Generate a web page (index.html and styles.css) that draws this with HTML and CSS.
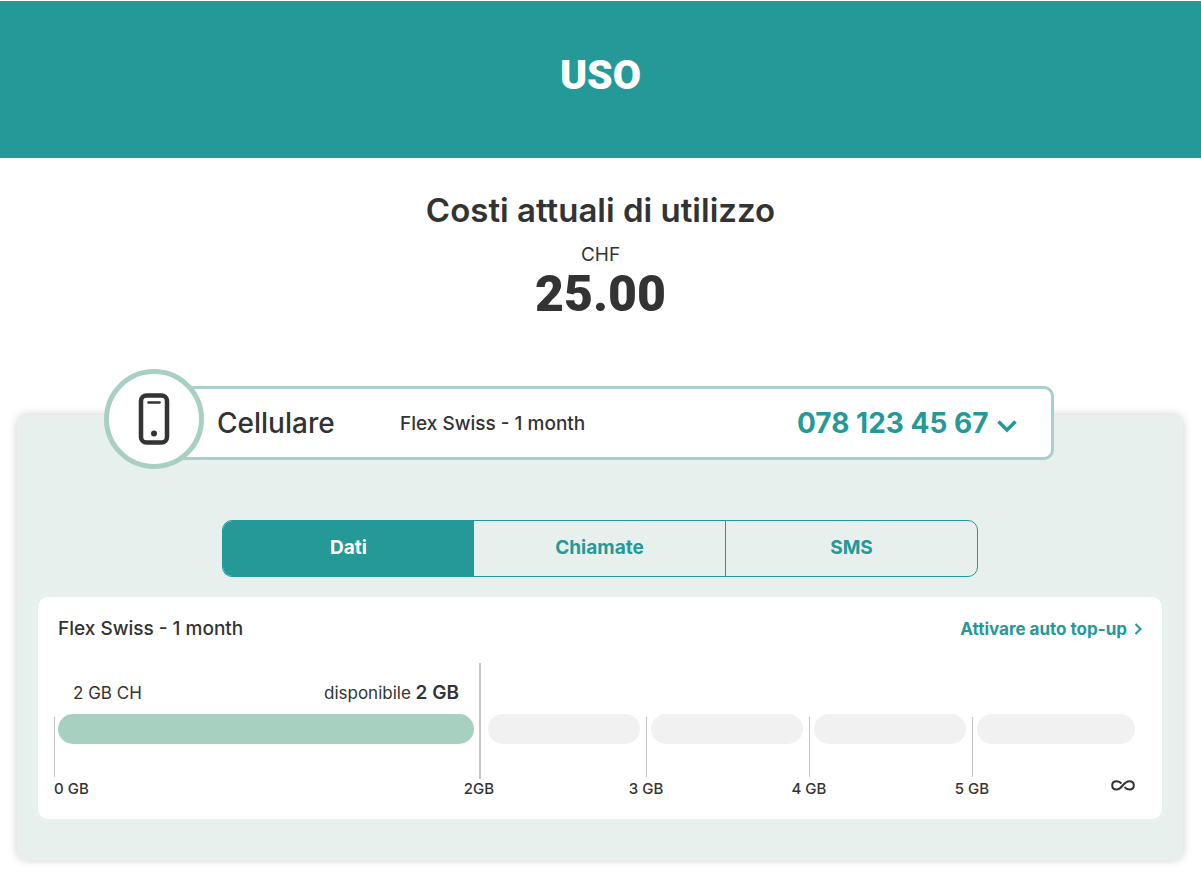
FILE: index.html
```html
<!DOCTYPE html>
<html lang="it">
<head>
    <meta charset="UTF-8">
    <meta name="viewport" content="width=device-width, initial-scale=1.0">
    <title>Uso</title>
    <link rel="stylesheet" href="styles.css">
</head>
<body>
    <header class="page-header">
        <h1>USO</h1>
    </header>

    <section class="costs">
        <h2>Costi attuali di utilizzo</h2>
        <div class="currency">CHF</div>
        <div class="amount">25.00</div>
    </section>

    <main class="panel">
        <div class="product">
            <div class="product-icon">
                <svg width="32" height="52" viewBox="0 0 32 52" fill="none" stroke="#333">
                    <rect x="3" y="2.5" width="26" height="47" rx="5.5" stroke-width="4.5"/>
                    <path d="M10.500 9.500H21.500" stroke-width="2.500" stroke-linecap="round"/>
                    <circle cx="16" cy="40.500" r="3" fill="#333" stroke="none"/>
                </svg>
            </div>
            <label class="product-name" for="number">Cellulare</label>
            <span class="product-plan">Flex Swiss - 1 month</span>
            <div class="product-number">
                <select id="number">
                    <option>078 123 45 67</option>
                </select>
                <svg class="chevron" width="20" height="13" viewBox="0 0 20 13" fill="none" stroke="#259998" stroke-width="3.500">
                    <path d="M1.500 1.500L10 10L18.500 1.500"/>
                </svg>
            </div>
        </div>

        <div class="tabs">
            <button class="tab active" type="button">Dati</button>
            <button class="tab" type="button">Chiamate</button>
            <button class="tab" type="button">SMS</button>
        </div>

        <div class="card">
            <div class="card-head">
                <h3>Flex Swiss - 1 month</h3>
                <a href="#" class="topup">Attivare auto top-up
                    <svg width="8" height="12" viewBox="0 0 8 12" fill="none" stroke="#259998" stroke-width="2">
                        <path d="M1.500 1L6.500 6L1.500 11"/>
                    </svg>
                </a>
            </div>

            <div class="chart">
                <div class="segment">
                    <div class="tick"></div>
                    <div class="usage">
                        <div class="usage-text">
                            <span>2 GB CH</span>
                            <span>disponibile <strong>2 GB</strong></span>
                        </div>
                        <div class="bar available"></div>
                    </div>
                </div>
                <div class="segment">
                    <div class="tick limit"></div>
                    <div class="bar"></div>
                </div>
                <div class="segment">
                    <div class="tick"></div>
                    <div class="bar"></div>
                </div>
                <div class="segment">
                    <div class="tick"></div>
                    <div class="bar"></div>
                </div>
                <div class="segment">
                    <div class="tick"></div>
                    <div class="bar"></div>
                </div>
            </div>

            <div class="chart scale">
                <div class="mark"><span class="first">0 GB</span></div>
                <div class="mark"><span>2GB</span></div>
                <div class="mark"><span>3 GB</span></div>
                <div class="mark"><span>4 GB</span></div>
                <div class="mark">
                    <span>5 GB</span>
                    <svg width="24" height="13" viewBox="0 -1 24 13" fill="none" stroke="#333" stroke-width="2">
                        <path d="M10.500 3.500C9 1.800 7.800 1.200 5.800 1.200C3 1.200 1.200 3 1.200 5.300C1.200 7.700 3 9.500 5.800 9.500C11 9.500 12.500 1.200 18.200 1.200C21 1.200 22.800 3 22.800 5.300C22.800 7.700 21 9.500 18.200 9.500C16.200 9.500 15 8.900 13.500 7.200"/>
                    </svg>
                </div>
            </div>
        </div>
    </main>
</body>
</html>
```

FILE: styles.css
```css
* {
    box-sizing: border-box;
}
body {
    margin: 0;
    padding-top: 1px;
    font-family: Inter, "Open Sans", sans-serif;
    font-size: 19px;
    color: #333;
    background-color: white;
}
h1, h2, h3 {
    margin: 0;
}
.page-header {
    background-color: #259998;
    color: white;
    padding: 49px 20px 58px;
    text-align: center;
}
h1 {
    font-family: Roboto, sans-serif;
    font-size: 41px;
    font-weight: 900;
    line-height: 50px;
}
.costs {
    padding-top: 32px;
    text-align: center;
}
h2 {
    font-size: 33px;
    font-weight: 600;
    line-height: 40px;
}
.currency {
    margin-top: 13px;
    line-height: 24px;
}
.amount {
    font-family: Roboto, sans-serif;
    font-size: 50px;
    font-weight: 900;
    line-height: 54px;
}
.panel {
    margin: 94px 18px 16px 17px;
    padding: 0 21px 41px;
    background-color: #e7f0ed;
    border-radius: 10px;
    box-shadow: 0 0 10px rgba(0, 0, 0, 0.2);
    display: flow-root;
}
.product {
    position: relative;
    display: flex;
    align-items: center;
    height: 74px;
    margin: -29px 108px 60px 116px;
    padding: 0 34px 0 60px;
    background-color: white;
    border: 3px solid #a7cfcf;
    border-radius: 10px;
}
.product-icon {
    position: absolute;
    left: -53px;
    top: -20px;
    width: 100px;
    height: 100px;
    display: flex;
    align-items: center;
    justify-content: center;
    background-color: white;
    border: 5px solid #a7d0c0;
    border-radius: 50%;
}
.product-name {
    width: 183px;
    font-size: 28px;
    font-weight: 500;
}
.product-plan {
    font-weight: 500;
}
.product-number {
    position: relative;
    margin-left: auto;
}
.product-number select {
    appearance: none;
    border: none;
    background: none;
    padding: 0 28px 0 0;
    font-family: inherit;
    font-size: 28px;
    font-weight: 700;
    color: #259998;
    cursor: pointer;
}
.chevron {
    position: absolute;
    right: 0;
    top: 14px;
    pointer-events: none;
}
.tabs {
    display: flex;
    max-width: 756px;
    margin: 0 auto 20px;
    border: 1px solid #259998;
    border-radius: 10px;
    overflow: hidden;
}
.tab {
    flex: 1;
    height: 55px;
    padding: 0 0 2px;
    border: none;
    border-left: 1px solid #259998;
    background: none;
    font-family: inherit;
    font-size: 19px;
    font-weight: 700;
    color: #259998;
    cursor: pointer;
}
.tab:first-child, .tab.active + .tab {
    border-left: none;
}
.tab.active {
    background-color: #259998;
    color: white;
}
.card {
    padding: 20px 20px 21px;
    background-color: white;
    border-radius: 10px;
}
.card-head {
    display: flex;
    justify-content: space-between;
    align-items: center;
    line-height: 24px;
}
h3 {
    font-size: 19px;
    font-weight: 500;
}
.topup {
    display: flex;
    align-items: center;
    gap: 7px;
    font-size: 17px;
    font-weight: 700;
    color: #259998;
    text-decoration: none;
}
.chart {
    display: grid;
    grid-template-columns: 425fr 167fr 163fr 163fr 163fr;
    margin: 22px 7px 0 -4px;
}
.segment {
    display: flex;
    align-items: flex-start;
}
.tick {
    width: 1px;
    height: 60px;
    margin-top: 54px;
    background-color: #c6c6c6;
}
.tick.limit {
    width: 2px;
    height: 116px;
    margin-top: 0;
}
.bar {
    flex: 1;
    height: 30px;
    margin: 51px 6px 0 4px;
    background-color: #f1f1f1;
    border-radius: 15px;
}
.limit + .bar {
    margin-left: 7px;
}
.segment:last-child .bar {
    margin-right: 0;
}
.usage {
    flex: 1;
    padding: 18px 5px 0 3px;
}
.usage-text {
    display: flex;
    justify-content: space-between;
    align-items: baseline;
    padding: 0 15px;
    font-size: 17px;
    line-height: 24px;
}
.usage-text strong {
    font-size: 19px;
    font-weight: 600;
}
.bar.available {
    margin: 9px 0 0;
    background-color: #a7d0c0;
}
.scale {
    margin-top: 0;
    font-size: 15px;
    font-weight: 500;
    line-height: 19px;
}
.mark {
    display: flex;
    justify-content: space-between;
}
.mark span {
    width: 60px;
    margin-left: -30px;
    text-align: center;
}
.mark .first {
    margin-left: 0;
    text-align: left;
}
```
